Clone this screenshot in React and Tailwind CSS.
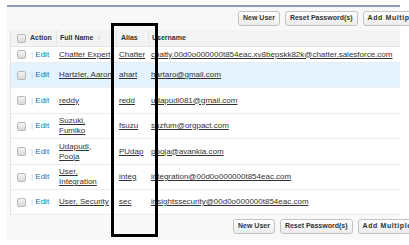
import React from "react";

const rows = [
  { name: ["Chatter Expert"], alias: "Chatter", user: "chatty.00d0o000000t854eac.xv8bepskk82k@chatter.salesforce.com", h: "h-[16px]" },
  { name: ["Hartzler, Aaron"], alias: "ahart", user: "hartaro@gmail.com", h: "h-[25px]", hl: true },
  { name: ["reddy"], alias: "redd", user: "udapudi081@gmail.com", h: "h-[26px]" },
  { name: ["Suzuki,", "Fumiko"], alias: "fsuzu", user: "suzfum@orgpact.com", h: "h-[25px]" },
  { name: ["Udapudi,", "Pooja"], alias: "PUdap", user: "pooja@avankia.com", h: "h-[26px]" },
  { name: ["User,", "Integration"], alias: "integ", user: "integration@00d0o000000t854eac.com", h: "h-[25px]" },
  { name: ["User, Security"], alias: "sec", user: "insightssecurity@00d0o000000t854eac.com", h: "h-[25px]" },
];

function Checkbox() {
  return (
    <div className="ml-[6px] w-[9px] h-[9px] rounded-[2px] border border-[#b9b9b9] bg-gradient-to-b from-[#f4f4f4] to-[#d9d9d9]" />
  );
}

function Btn({ children, wide }) {
  return (
    <div
      className={`h-[15px] px-[4px] flex items-center rounded-[3px] border border-[#c2c2c2] bg-gradient-to-b from-white to-[#ececec] text-[7px] font-bold text-[#333] whitespace-nowrap shrink-0 ${wide ? "tracking-[0.6px]" : ""}`}
    >
      {children}
    </div>
  );
}

const grid = "grid grid-cols-[18px_27px_60px_32px_1fr] items-center";

export default function App() {
  return (
    <div className="relative w-[409px] h-[245px] bg-white overflow-hidden font-['Liberation_Sans',Arial,sans-serif]">
      <div className="mt-[5px] ml-[7px] w-[393px] h-[235px] bg-[#f8f8f8] border-t-2 border-[#8f9bb5] flex flex-col">
        <div className="h-[23px] pt-[4px] pl-[231px] flex gap-[5px] items-start">
          <Btn>New User</Btn>
          <Btn>Reset Password(s)</Btn>
          <Btn wide>Add Multiple Users</Btn>
        </div>
        <div className="ml-[3px] w-[390px] bg-white border-l border-[#e3e3e3]">
          <div className={`${grid} h-[17px] bg-[#f2f3f3] border-b border-[#e2e4e6] text-[7px] font-bold text-[#333]`}>
            <Checkbox />
            <div className="pl-[1px]">Action</div>
            <div className="pl-[3px] border-l border-[#e4e4e4] h-full flex items-center">
              Full Name <span className="ml-[4px] text-[6px] text-[#999] font-normal">↑</span>
            </div>
            <div className="pl-[4px] border-l border-[#e4e4e4] h-full flex items-center">Alias</div>
            <div className="pl-[3px] border-l border-[#e4e4e4] h-full flex items-center">Username</div>
          </div>
          {rows.map((r, i) => (
            <div
              key={i}
              className={`${grid} ${r.h} border-b border-[#ececec] text-[8px] leading-[10px] text-[#333] ${r.hl ? "bg-[#e3f3ff]" : ""}`}
            >
              <Checkbox />
              <div className="pl-[2px] whitespace-nowrap">
                <span className="text-[#c4c9d0]">|</span>{" "}
                <span className="text-[#2470b3]">Edit</span>
              </div>
              <div className="pl-[3px] whitespace-nowrap">
                {r.name.map((l, j) => (
                  <div key={j}>
                    <span className="underline">{l}</span>
                  </div>
                ))}
              </div>
              <div className="pl-[3px] whitespace-nowrap">
                <span className="underline">{r.alias}</span>
              </div>
              <div className="pl-[3px] whitespace-nowrap">
                <span className="underline">{r.user}</span>
              </div>
            </div>
          ))}
        </div>
        <div className="h-[25px] pt-[4px] pl-[226px] flex gap-[5px] items-start">
          <Btn>New User</Btn>
          <Btn>Reset Password(s)</Btn>
          <Btn wide>Add Multiple Users</Btn>
        </div>
      </div>
      <div className="absolute left-[111px] top-[23px] w-[47px] h-[214px] border-[3.5px] border-black" />
    </div>
  );
}
